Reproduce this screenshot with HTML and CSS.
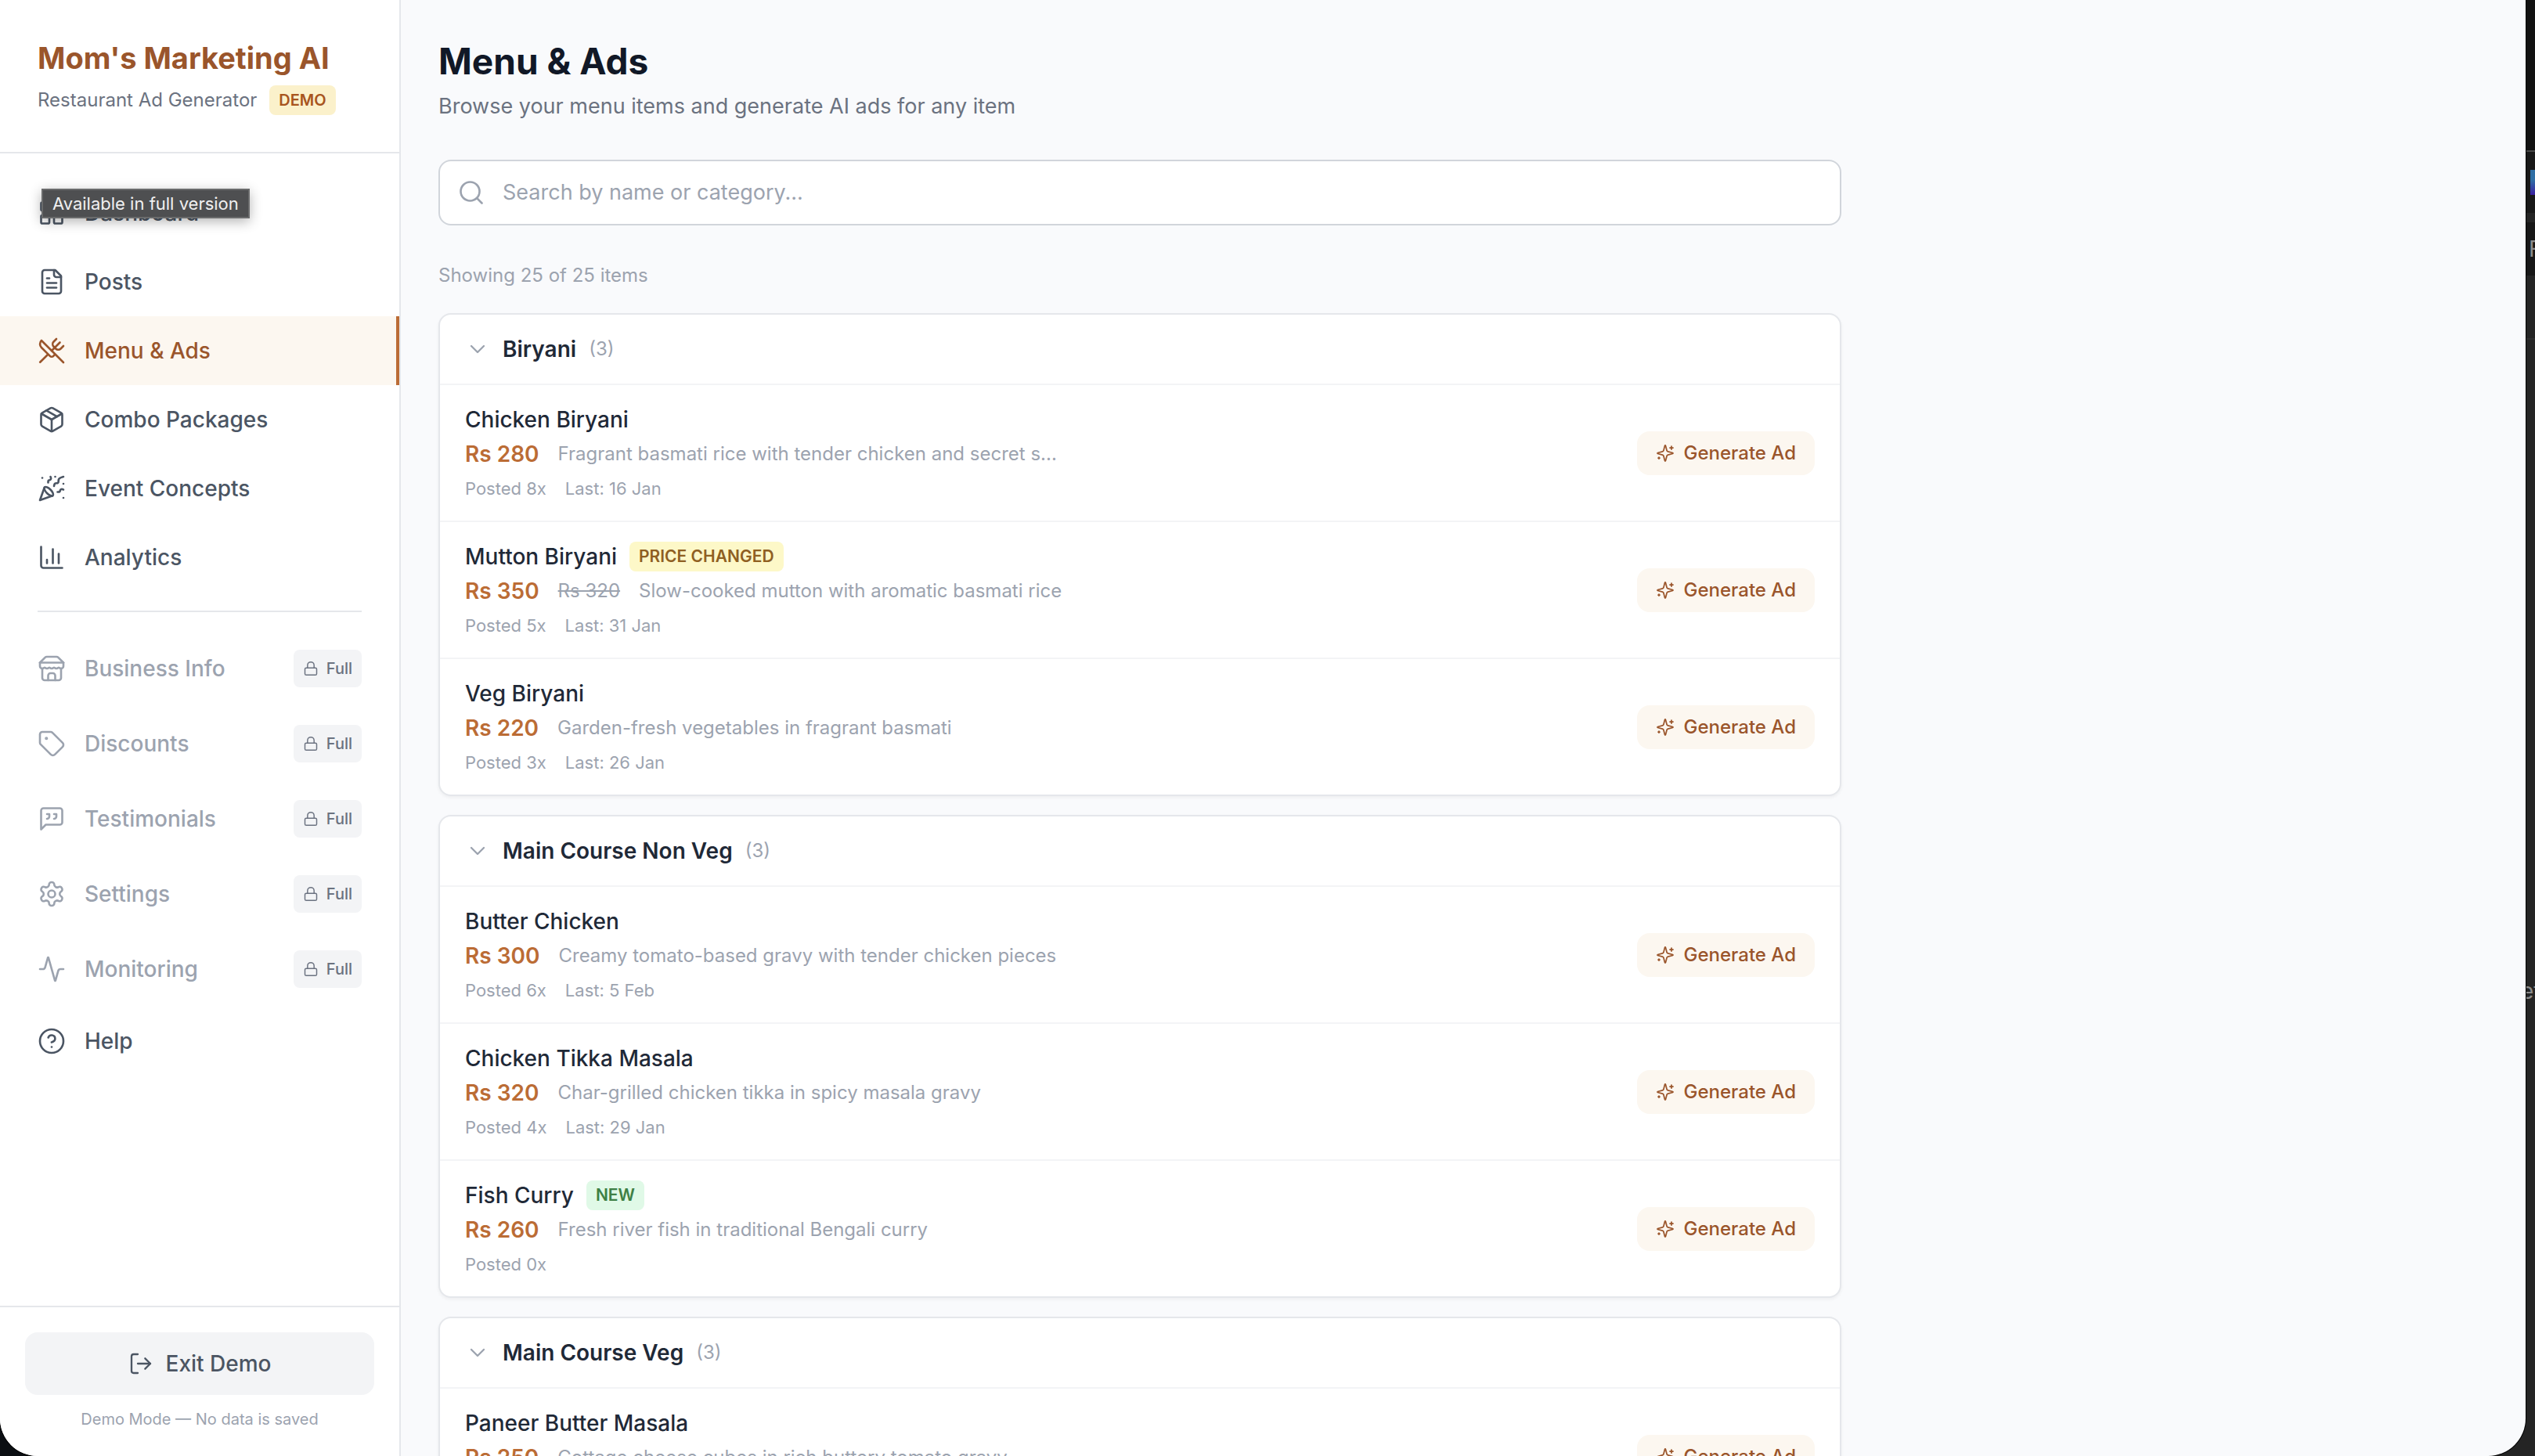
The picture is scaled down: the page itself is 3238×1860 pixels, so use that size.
FILE: index.html
```html
<!DOCTYPE html>
<html lang="en">

<head>
    <meta charset="UTF-8">
    <meta name="viewport" content="width=device-width, initial-scale=1.0">
    <title>Mom's Marketing AI</title>
    <link rel="stylesheet" href="styles.css">
</head>

<body>
    <!-- icons -->
    <svg class="sprite" xmlns="http://www.w3.org/2000/svg">
        <symbol id="i-grid" viewBox="0 0 24 24"><rect width="7" height="7" x="3" y="3" rx="1"/><rect width="7" height="7" x="14" y="3" rx="1"/><rect width="7" height="7" x="14" y="14" rx="1"/><rect width="7" height="7" x="3" y="14" rx="1"/></symbol>
        <symbol id="i-file" viewBox="0 0 24 24"><path d="M15 2H6a2 2 0 0 0-2 2v16a2 2 0 0 0 2 2h12a2 2 0 0 0 2-2V7Z"/><path d="M14 2v4a2 2 0 0 0 2 2h4"/><path d="M10 9H8"/><path d="M16 13H8"/><path d="M16 17H8"/></symbol>
        <symbol id="i-menu" viewBox="0 0 24 24"><path d="m16 2-2.3 2.3a3 3 0 0 0 0 4.2l1.8 1.8a3 3 0 0 0 4.2 0L22 8"/><path d="M15 15 3.3 3.3a4.2 4.2 0 0 0 0 6l7.3 7.3c.7.7 2 .7 2.8 0L15 15Zm0 0 7 7"/><path d="m2.1 21.8 6.4-6.3"/><path d="m19 5-7 7"/></symbol>
        <symbol id="i-package" viewBox="0 0 24 24"><path d="m7.5 4.27 9 5.15"/><path d="M21 8a2 2 0 0 0-1-1.73l-7-4a2 2 0 0 0-2 0l-7 4A2 2 0 0 0 3 8v8a2 2 0 0 0 1 1.73l7 4a2 2 0 0 0 2 0l7-4A2 2 0 0 0 21 16Z"/><path d="m3.3 7 8.7 5 8.7-5"/><path d="M12 22V12"/></symbol>
        <symbol id="i-party" viewBox="0 0 24 24"><path d="M5.8 11.3 2 22l10.7-3.79"/><path d="M4 3h.01"/><path d="M22 8h.01"/><path d="M15 2h.01"/><path d="M22 20h.01"/><path d="m22 2-2.24.75a2.9 2.9 0 0 0-1.96 3.12c.1.86-.57 1.63-1.45 1.63h-.38c-.86 0-1.6.6-1.76 1.44L14 10"/><path d="m22 13-.82-.33c-.86-.34-1.82.2-1.98 1.11c-.11.7-.72 1.22-1.43 1.22H17"/><path d="m11 2 .33.82c.34.86-.2 1.82-1.11 1.98C9.52 4.9 9 5.52 9 6.23V7"/><path d="M11 13c1.93 1.93 2.83 4.17 2 5-.83.83-3.07-.07-5-2-1.93-1.93-2.83-4.17-2-5 .83-.83 3.07.07 5 2Z"/></symbol>
        <symbol id="i-chart" viewBox="0 0 24 24"><path d="M3 3v16a2 2 0 0 0 2 2h16"/><path d="M18 17V9"/><path d="M13 17V5"/><path d="M8 17v-3"/></symbol>
        <symbol id="i-store" viewBox="0 0 24 24"><path d="m2 7 4.41-4.41A2 2 0 0 1 7.83 2h8.34a2 2 0 0 1 1.42.59L22 7"/><path d="M4 12v8a2 2 0 0 0 2 2h12a2 2 0 0 0 2-2v-8"/><path d="M15 22v-4a2 2 0 0 0-2-2h-2a2 2 0 0 0-2 2v4"/><path d="M2 7h20"/><path d="M22 7v3a2 2 0 0 1-2 2a2.7 2.7 0 0 1-1.59-.63.7.7 0 0 0-.82 0A2.7 2.7 0 0 1 16 12a2.7 2.7 0 0 1-1.59-.63.7.7 0 0 0-.82 0A2.7 2.7 0 0 1 12 12a2.7 2.7 0 0 1-1.59-.63.7.7 0 0 0-.82 0A2.7 2.7 0 0 1 8 12a2.7 2.7 0 0 1-1.59-.63.7.7 0 0 0-.82 0A2.7 2.7 0 0 1 4 12a2 2 0 0 1-2-2V7"/></symbol>
        <symbol id="i-tag" viewBox="0 0 24 24"><path d="M12.586 2.586A2 2 0 0 0 11.172 2H4a2 2 0 0 0-2 2v7.172a2 2 0 0 0 .586 1.414l8.704 8.704a2.426 2.426 0 0 0 3.42 0l6.58-6.58a2.426 2.426 0 0 0 0-3.42z"/><circle cx="7.5" cy="7.5" r=".5" fill="currentColor"/></symbol>
        <symbol id="i-quote" viewBox="0 0 24 24"><path d="M21 15a2 2 0 0 1-2 2H7l-4 4V5a2 2 0 0 1 2-2h14a2 2 0 0 1 2 2z"/><path d="M8 12a2 2 0 0 0 2-2V8H8"/><path d="M14 12a2 2 0 0 0 2-2V8h-2"/></symbol>
        <symbol id="i-gear" viewBox="0 0 24 24"><path d="M12.22 2h-.44a2 2 0 0 0-2 2v.18a2 2 0 0 1-1 1.73l-.43.25a2 2 0 0 1-2 0l-.15-.08a2 2 0 0 0-2.73.73l-.22.38a2 2 0 0 0 .73 2.73l.15.1a2 2 0 0 1 1 1.72v.51a2 2 0 0 1-1 1.74l-.15.09a2 2 0 0 0-.73 2.73l.22.38a2 2 0 0 0 2.73.73l.15-.08a2 2 0 0 1 2 0l.43.25a2 2 0 0 1 1 1.73V20a2 2 0 0 0 2 2h.44a2 2 0 0 0 2-2v-.18a2 2 0 0 1 1-1.73l.43-.25a2 2 0 0 1 2 0l.15.08a2 2 0 0 0 2.73-.73l.22-.39a2 2 0 0 0-.73-2.73l-.15-.08a2 2 0 0 1-1-1.74v-.5a2 2 0 0 1 1-1.74l.15-.09a2 2 0 0 0 .73-2.73l-.22-.38a2 2 0 0 0-2.73-.73l-.15.08a2 2 0 0 1-2 0l-.43-.25a2 2 0 0 1-1-1.73V4a2 2 0 0 0-2-2z"/><circle cx="12" cy="12" r="3"/></symbol>
        <symbol id="i-pulse" viewBox="0 0 24 24"><path d="M22 12h-2.48a2 2 0 0 0-1.93 1.46l-2.35 8.36a.25.25 0 0 1-.48 0L9.24 2.18a.25.25 0 0 0-.48 0l-2.35 8.36A2 2 0 0 1 4.49 12H2"/></symbol>
        <symbol id="i-help" viewBox="0 0 24 24"><circle cx="12" cy="12" r="10"/><path d="M9.09 9a3 3 0 0 1 5.83 1c0 2-3 3-3 3"/><path d="M12 17h.01"/></symbol>
        <symbol id="i-lock" viewBox="0 0 24 24"><rect width="18" height="11" x="3" y="11" rx="2"/><path d="M7 11V7a5 5 0 0 1 10 0v4"/></symbol>
        <symbol id="i-exit" viewBox="0 0 24 24"><path d="m16 17 5-5-5-5"/><path d="M21 12H9"/><path d="M9 21H5a2 2 0 0 1-2-2V5a2 2 0 0 1 2-2h4"/></symbol>
        <symbol id="i-search" viewBox="0 0 24 24"><circle cx="11" cy="11" r="8"/><path d="m21 21-4.3-4.3"/></symbol>
        <symbol id="i-down" viewBox="0 0 24 24"><path d="m6 9 6 6 6-6"/></symbol>
        <symbol id="i-spark" viewBox="0 0 24 24"><path d="M9.937 15.5A2 2 0 0 0 8.5 14.063l-6.135-1.582a.5.5 0 0 1 0-.962L8.5 9.936A2 2 0 0 0 9.937 8.5l1.582-6.135a.5.5 0 0 1 .963 0L14.063 8.5A2 2 0 0 0 15.5 9.937l6.135 1.581a.5.5 0 0 1 0 .964L15.5 14.063a2 2 0 0 0-1.437 1.437l-1.582 6.135a.5.5 0 0 1-.963 0z"/><path d="M20 3v4"/><path d="M22 5h-4"/><path d="M4 17v2"/><path d="M5 18H3"/></symbol>
    </svg>

    <!-- desktop behind the window -->
    <div class="desktop">
        <div class="top"></div>
        <div class="tabs"><span class="app-icon"></span></div>
        <div class="bar">F</div>
        <div class="line"></div>
        <div class="rest">et</div>
    </div>

    <div class="window">
        <aside class="sidebar">
            <div class="brand">
                <h1>Mom's Marketing AI</h1>
                <p>Restaurant Ad Generator <span class="badge demo">DEMO</span></p>
            </div>

            <nav class="nav">
                <a href="#"><svg class="icon"><use href="#i-grid"/></svg>Dashboard</a>
                <a href="#"><svg class="icon"><use href="#i-file"/></svg>Posts</a>
                <a href="#" class="active"><svg class="icon"><use href="#i-menu"/></svg>Menu &amp; Ads</a>
                <a href="#"><svg class="icon"><use href="#i-package"/></svg>Combo Packages</a>
                <a href="#"><svg class="icon"><use href="#i-party"/></svg>Event Concepts</a>
                <a href="#"><svg class="icon"><use href="#i-chart"/></svg>Analytics</a>
                <hr>
                <a href="#" class="locked"><svg class="icon"><use href="#i-store"/></svg>Business Info <span class="full"><svg class="icon"><use href="#i-lock"/></svg>Full</span></a>
                <a href="#" class="locked"><svg class="icon"><use href="#i-tag"/></svg>Discounts <span class="full"><svg class="icon"><use href="#i-lock"/></svg>Full</span></a>
                <a href="#" class="locked"><svg class="icon"><use href="#i-quote"/></svg>Testimonials <span class="full"><svg class="icon"><use href="#i-lock"/></svg>Full</span></a>
                <a href="#" class="locked"><svg class="icon"><use href="#i-gear"/></svg>Settings <span class="full"><svg class="icon"><use href="#i-lock"/></svg>Full</span></a>
                <a href="#" class="locked"><svg class="icon"><use href="#i-pulse"/></svg>Monitoring <span class="full"><svg class="icon"><use href="#i-lock"/></svg>Full</span></a>
                <a href="#"><svg class="icon"><use href="#i-help"/></svg>Help</a>
                <div class="tooltip" role="tooltip">Available in full version</div>
            </nav>

            <div class="bottom">
                <button type="button" class="exit"><svg class="icon"><use href="#i-exit"/></svg>Exit Demo</button>
                <p>Demo Mode — No data is saved</p>
            </div>
        </aside>

        <main class="main">
            <div class="content">
                <h2>Menu &amp; Ads</h2>
                <p class="intro">Browse your menu items and generate AI ads for any item</p>

                <label class="search">
                    <svg class="icon"><use href="#i-search"/></svg>
                    <input type="text" placeholder="Search by name or category..." aria-label="Search by name or category">
                </label>

                <p class="count">Showing 25 of 25 items</p>

                <section class="card">
                    <button type="button" class="card-head"><svg class="icon"><use href="#i-down"/></svg><b>Biryani</b><span>(3)</span></button>
                    <div class="item">
                        <div class="info">
                            <h3>Chicken Biryani</h3>
                            <div class="price"><b>Rs 280</b><span>Fragrant basmati rice with tender chicken and secret s...</span></div>
                            <div class="meta"><span>Posted 8x</span><span>Last: 16 Jan</span></div>
                        </div>
                        <button type="button" class="generate"><svg class="icon"><use href="#i-spark"/></svg>Generate Ad</button>
                    </div>
                    <div class="item">
                        <div class="info">
                            <h3>Mutton Biryani <span class="badge changed">PRICE CHANGED</span></h3>
                            <div class="price"><b>Rs 350</b><del>Rs 320</del><span>Slow-cooked mutton with aromatic basmati rice</span></div>
                            <div class="meta"><span>Posted 5x</span><span>Last: 31 Jan</span></div>
                        </div>
                        <button type="button" class="generate"><svg class="icon"><use href="#i-spark"/></svg>Generate Ad</button>
                    </div>
                    <div class="item">
                        <div class="info">
                            <h3>Veg Biryani</h3>
                            <div class="price"><b>Rs 220</b><span>Garden-fresh vegetables in fragrant basmati</span></div>
                            <div class="meta"><span>Posted 3x</span><span>Last: 26 Jan</span></div>
                        </div>
                        <button type="button" class="generate"><svg class="icon"><use href="#i-spark"/></svg>Generate Ad</button>
                    </div>
                </section>

                <section class="card">
                    <button type="button" class="card-head"><svg class="icon"><use href="#i-down"/></svg><b>Main Course Non Veg</b><span>(3)</span></button>
                    <div class="item">
                        <div class="info">
                            <h3>Butter Chicken</h3>
                            <div class="price"><b>Rs 300</b><span>Creamy tomato-based gravy with tender chicken pieces</span></div>
                            <div class="meta"><span>Posted 6x</span><span>Last: 5 Feb</span></div>
                        </div>
                        <button type="button" class="generate"><svg class="icon"><use href="#i-spark"/></svg>Generate Ad</button>
                    </div>
                    <div class="item">
                        <div class="info">
                            <h3>Chicken Tikka Masala</h3>
                            <div class="price"><b>Rs 320</b><span>Char-grilled chicken tikka in spicy masala gravy</span></div>
                            <div class="meta"><span>Posted 4x</span><span>Last: 29 Jan</span></div>
                        </div>
                        <button type="button" class="generate"><svg class="icon"><use href="#i-spark"/></svg>Generate Ad</button>
                    </div>
                    <div class="item">
                        <div class="info">
                            <h3>Fish Curry <span class="badge new">NEW</span></h3>
                            <div class="price"><b>Rs 260</b><span>Fresh river fish in traditional Bengali curry</span></div>
                            <div class="meta"><span>Posted 0x</span></div>
                        </div>
                        <button type="button" class="generate"><svg class="icon"><use href="#i-spark"/></svg>Generate Ad</button>
                    </div>
                </section>

                <section class="card">
                    <button type="button" class="card-head"><svg class="icon"><use href="#i-down"/></svg><b>Main Course Veg</b><span>(3)</span></button>
                    <div class="item">
                        <div class="info">
                            <h3>Paneer Butter Masala</h3>
                            <div class="price"><b>Rs 250</b><span>Cottage cheese cubes in rich buttery tomato gravy</span></div>
                            <div class="meta"></div>
                        </div>
                        <button type="button" class="generate"><svg class="icon"><use href="#i-spark"/></svg>Generate Ad</button>
                    </div>
                </section>
            </div>
        </main>
    </div>
</body>

</html>
```
FILE: styles.css
```css
*{
    margin:0;
    padding:0;
    box-sizing:border-box;
}
body{
    height:100vh;
    overflow:hidden;
    background:#0b0e12;
    color:#1f2937;
    font-family:Inter, "Liberation Sans", sans-serif;
    font-size:28px;
    line-height:40px;
}
button, input{
    font:inherit;
    color:inherit;
    border:none;
}
a{
    color:inherit;
    text-decoration:none;
}
.sprite{
    display:none;
}
.icon{
    flex:none;
    width:36px;
    height:36px;
    fill:none;
    stroke:currentColor;
    stroke-width:1.75;
    stroke-linecap:round;
    stroke-linejoin:round;
}

/* desktop strip that shows to the right of the window */
.desktop{
    position:absolute;
    top:0;
    right:0;
    bottom:0;
    width:100px;
    display:flex;
    flex-direction:column;
    background:#242424;
    color:#8c8c8c;
    overflow:hidden;
}
.desktop > div{
    display:flex;
    align-items:center;
    padding-left:92px;
}
.desktop .top{
    height:192px;
    background:#111;
}
.desktop .tabs{
    height:80px;
    padding-left:94px;
    border-top:2px solid #484848;
    background:#181818;
}
.app-icon{
    flex:none;
    width:32px;
    height:32px;
    background:linear-gradient(#2f6fa5 40%, #3a1fa0);
}
.desktop .bar{
    height:68px;
    margin-top:12px;
    background:#171717;
}
.desktop .line{
    height:82px;
    border-bottom:2px solid #2e2e2e;
}
.desktop .rest{
    padding-top:812px;
    padding-left:82px;
}

.window{
    position:relative;
    display:flex;
    height:100vh;
    margin-right:12px;
    background:#f9fafc;
    border-radius:0 0 48px 48px;
    box-shadow:0 0 0 1px #000;
    overflow:hidden;
}
.sidebar{
    flex:none;
    display:flex;
    flex-direction:column;
    width:512px;
    background:#fff;
    border-right:2px solid #e5e7eb;
}
.brand{
    height:196px;
    padding:44px 48px;
    border-bottom:2px solid #e5e7eb;
}
.brand h1{
    color:#9a552b;
    font-size:38px;
    line-height:60px;
}
.brand p{
    display:flex;
    align-items:center;
    gap:16px;
    color:#6b7280;
    font-size:24px;
    line-height:48px;
}
.badge{
    padding:4px 12px;
    border-radius:8px;
    font-size:20px;
    font-weight:600;
    line-height:30px;
}
.demo{
    background:#fbf1cb;
    color:#a8551e;
}
.changed{
    background:#fdf8c8;
    color:#8f5f22;
}
.new{
    background:#e0f9e7;
    color:#3e7f45;
}
.nav{
    position:relative;
    flex:1;
    padding:32px 0;
    color:#4b5563;
    font-weight:500;
}
.nav a{
    display:flex;
    align-items:center;
    gap:24px;
    height:88px;
    padding:0 48px;
}
.nav a.active{
    background:#fcf7f0;
    color:#9a552b;
    border-right:4px solid #bb6c35;
}
.nav a.locked{
    height:96px;
    color:#9ca3af;
}
.nav hr{
    margin:24px 48px;
    border:none;
    border-top:2px solid #e5e7eb;
}
.full{
    display:flex;
    align-items:center;
    gap:10px;
    height:48px;
    margin-left:auto;
    padding:0 12px;
    border-radius:8px;
    background:#f3f4f6;
    color:#6b7280;
    font-size:20px;
}
.full .icon{
    width:20px;
    height:20px;
}
.tooltip{
    position:absolute;
    left:53px;
    top:45px;
    padding:2px 12px;
    border:2px solid #6a6b6c;
    background:#4e4f51;
    color:#f0f0f0;
    font-size:22px;
    font-weight:400;
    line-height:30px;
    box-shadow:0 4px 16px rgba(0,0,0,0.3);
}
.bottom{
    padding:32px;
    border-top:2px solid #e5e7eb;
    text-align:center;
}
.exit{
    display:flex;
    align-items:center;
    justify-content:center;
    gap:16px;
    width:100%;
    height:80px;
    margin-bottom:16px;
    border-radius:16px;
    background:#f3f4f6;
    color:#4b5563;
    font-weight:500;
}
.exit .icon{
    width:32px;
    height:32px;
}
.bottom p{
    color:#9ca3af;
    font-size:20px;
    line-height:30px;
}

.main{
    flex:1;
    padding:48px;
}
.content{
    max-width:1792px;
}
.content h2{
    color:#111827;
    font-size:46px;
    line-height:60px;
}
.intro{
    margin:8px 0 48px;
    color:#6b7280;
    font-size:27px;
}
.search{
    display:flex;
    align-items:center;
    gap:22px;
    height:84px;
    padding:0 22px;
    border:2px solid #d1d5db;
    border-radius:16px;
    background:#fff;
    color:#9ca3af;
    font-size:27px;
}
.search input{
    flex:1;
    background:none;
    outline:none;
}
.search input::placeholder{
    color:#9ca3af;
}
.count{
    margin:44px 0 28px;
    color:#9ca3af;
    font-size:24px;
}
.card{
    margin-bottom:24px;
    border:2px solid #e5e7eb;
    border-radius:16px;
    background:#fff;
    box-shadow:0 2px 4px rgba(0,0,0,0.05);
    overflow:hidden;
}
.card-head{
    display:flex;
    align-items:center;
    gap:16px;
    width:100%;
    height:88px;
    padding:0 32px;
    background:none;
}
.card-head .icon{
    width:32px;
    height:32px;
    color:#9ca3af;
}
.card-head b{
    font-weight:600;
}
.card-head span{
    color:#9ca3af;
    font-size:24px;
}
.item{
    display:flex;
    align-items:center;
    justify-content:space-between;
    padding:24px 32px;
    border-top:2px solid #f3f4f6;
}
.info h3{
    display:flex;
    align-items:center;
    gap:16px;
    height:40px;
    font-size:28px;
    font-weight:500;
}
.info .badge{
    font-size:21px;
}
.price{
    display:flex;
    align-items:center;
    gap:24px;
    margin:4px 0 8px;
    color:#9ca3af;
    font-size:24px;
}
.price b{
    color:#bb6c35;
    font-size:28px;
    font-weight:600;
}
.meta{
    display:flex;
    gap:24px;
    min-height:33px;
    color:#9ca3af;
    font-size:22px;
    line-height:33px;
}
.generate{
    display:flex;
    align-items:center;
    gap:12px;
    height:56px;
    padding:0 24px;
    border-radius:16px;
    background:#fcf7f0;
    color:#9a552b;
    font-size:24px;
    font-weight:500;
}
.generate .icon{
    width:24px;
    height:24px;
}
```
